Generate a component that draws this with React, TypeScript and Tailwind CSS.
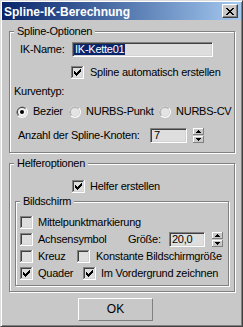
import type { ReactNode } from "react"

const X_ROWS = ["11000011", "01100110", "00111100", "00011000", "00111100", "01100110", "11000011"]

function CloseGlyph() {
  return (
    <svg width="8" height="7" viewBox="0 0 8 7" shapeRendering="crispEdges">
      {X_ROWS.flatMap((row, y) =>
        row.split("").map((c, x) => (c === "1" ? <rect key={`${x}-${y}`} x={x} y={y} width="1" height="1" fill="#000" /> : null)),
      )}
    </svg>
  )
}

function Check({ checked }: { checked?: boolean }) {
  return (
    <svg width="13" height="13" viewBox="0 0 13 13" shapeRendering="crispEdges" className="shrink-0">
      <rect width="13" height="13" fill="#fff" />
      <rect width="12" height="1" fill="#808080" />
      <rect width="1" height="12" fill="#808080" />
      <rect x="1" y="1" width="10" height="1" fill="#404040" />
      <rect x="1" y="1" width="1" height="10" fill="#404040" />
      <rect x="1" y="11" width="11" height="1" fill="#d4d4d4" />
      <rect x="11" y="1" width="1" height="11" fill="#d4d4d4" />
      <rect x="2" y="2" width="9" height="9" fill="#dedede" />
      {checked &&
        [5, 6, 7, 6, 5, 4, 3].map((top, i) => <rect key={i} x={3 + i} y={top} width="1" height="3" fill="#000" />)}
    </svg>
  )
}

function Radio({ checked }: { checked?: boolean }) {
  return (
    <svg width="12" height="12" viewBox="0 0 12 12" className="shrink-0">
      <circle cx="6" cy="6" r="6" fill="#fff" />
      <path d="M1.76 10.24A6 6 0 0 1 10.24 1.76L6 6Z" fill={checked ? "#808080" : "#a8a8a8"} />
      <circle cx="6" cy="6" r="5" fill="#d4d4d4" />
      <path d="M2.46 9.54A5 5 0 0 1 9.54 2.46L6 6Z" fill={checked ? "#404040" : "#b4b4b4"} />
      <circle cx="6" cy="6" r="4" fill={checked ? "#f4f4f4" : "#e4e4e4"} />
      {checked && <circle cx="6" cy="6" r="2" fill="#000" />}
    </svg>
  )
}

function Spin({ className = "" }: { className?: string }) {
  return (
    <svg width="11" height="15" viewBox="0 0 11 15" shapeRendering="crispEdges" className={`shrink-0 ${className}`}>
      <rect width="11" height="15" fill="#c8c8c8" />
      {/* upper half */}
      <rect width="11" height="1" fill="#fff" />
      <rect width="1" height="7" fill="#fff" />
      <rect y="6" width="11" height="1" fill="#808080" />
      <rect x="10" width="1" height="7" fill="#808080" />
      {/* lower half */}
      <rect y="8" width="11" height="1" fill="#fff" />
      <rect y="8" width="1" height="7" fill="#fff" />
      <rect y="14" width="11" height="1" fill="#808080" />
      <rect x="10" y="8" width="1" height="7" fill="#808080" />
      {/* arrows */}
      <rect x="5" y="2" width="1" height="1" fill="#000" />
      <rect x="4" y="3" width="3" height="1" fill="#000" />
      <rect x="3" y="4" width="5" height="1" fill="#000" />
      <rect x="3" y="10" width="5" height="1" fill="#000" />
      <rect x="4" y="11" width="3" height="1" fill="#000" />
      <rect x="5" y="12" width="1" height="1" fill="#000" />
    </svg>
  )
}

function Field({ className = "", children }: { className?: string; children: ReactNode }) {
  return (
    <div
      className={`flex h-[15px] shrink-0 items-center border border-t-[#808080] border-l-[#808080] border-r-white border-b-white bg-[#dedede] p-px shadow-[inset_1px_1px_0_#404040,inset_-1px_-1px_0_#d4d4d4] ${className}`}
    >
      {children}
    </div>
  )
}

function GroupBox({ label, className = "", children }: { label: string; className?: string; children: ReactNode }) {
  return (
    <div
      className={`relative shrink-0 border border-[#808080] shadow-[inset_1px_1px_0_#fff,1px_1px_0_#fff] ${className}`}
    >
      <span className="absolute -top-[7px] left-[4px] bg-[#c8c8c8] px-[3px] leading-[13px]">{label}</span>
      {children}
    </div>
  )
}

export default function App() {
  return (
    <div className="flex h-[327px] w-[243px] flex-col border border-t-[#dcdcdc] border-l-[#dcdcdc] border-r-[#404040] border-b-[#404040] bg-[#c8c8c8] p-px font-['Liberation_Sans',Arial,sans-serif] text-[11px] leading-[13px] tracking-[-0.25px] text-black shadow-[inset_1px_1px_0_#fff,inset_-1px_-1px_0_#808080]">
      {/* Title bar */}
      <div className="flex h-[18px] shrink-0 items-center justify-between bg-linear-to-r from-[#0a246a] to-[#a6caf0] pl-[2px] pr-[3px]">
        <span className="pt-px text-[12px] font-bold leading-[14px] tracking-normal text-white">Spline-IK-Berechnung</span>
        <div className="flex h-[14px] w-[16px] items-center justify-center border border-t-white border-l-white border-r-[#404040] border-b-[#404040] bg-[#c8c8c8] shadow-[inset_-1px_-1px_0_#808080]">
          <CloseGlyph />
        </div>
      </div>

      <GroupBox label="Spline-Optionen" className="ml-[7px] mt-[11px] h-[122px] w-[226px]">
        <div className="mt-[10px] flex h-[15px] items-center">
          <span className="ml-[10px] w-[52px]">IK-Name:</span>
          <Field className="w-[141px]">
            <span className="h-[11px] bg-[#0a246a] px-px leading-[11px] text-white">IK-Kette01</span>
          </Field>
        </div>
        <div className="ml-[61px] mt-[9px] flex h-[13px] items-center">
          <Check checked />
          <span className="ml-[6px]">Spline automatisch erstellen</span>
        </div>
        <div className="ml-[4px] mt-[6px]">Kurventyp:</div>
        <div className="ml-[6px] mt-[7px] flex h-[13px] items-center">
          <div className="flex w-[53px] items-center">
            <Radio checked />
            <span className="ml-[5px]">Bezier</span>
          </div>
          <div className="flex w-[90px] items-center">
            <Radio />
            <span className="ml-[5px]">NURBS-Punkt</span>
          </div>
          <div className="flex items-center">
            <Radio />
            <span className="ml-[5px]">NURBS-CV</span>
          </div>
        </div>
        <div className="ml-[8px] mt-[10px] flex h-[15px] items-center">
          <span className="w-[132px]">Anzahl der Spline-Knoten:</span>
          <Field className="w-[37px]">
            <span className="pl-[2px] leading-[11px]">7</span>
          </Field>
          <Spin className="ml-[6px]" />
        </div>
      </GroupBox>

      <GroupBox label="Helferoptionen" className="ml-[7px] mt-[10px] h-[129px] w-[226px]">
        <div className="ml-[62px] mt-[16px] flex h-[13px] items-center">
          <Check checked />
          <span className="ml-[5px]">Helfer erstellen</span>
        </div>
        <GroupBox label="Bildschirm" className="ml-[5px] mt-[8px] h-[85px] w-[214px]">
          <div className="ml-[4px] mt-[14px] flex h-[13px] items-center">
            <Check />
            <span className="ml-[5px]">Mittelpunktmarkierung</span>
          </div>
          <div className="ml-[4px] mt-[3px] flex h-[15px] items-center">
            <div className="flex w-[108px] items-center">
              <Check />
              <span className="ml-[5px]">Achsensymbol</span>
            </div>
            <span className="w-[41px]">Größe:</span>
            <Field className="w-[36px]">
              <span className="pl-px leading-[11px]">20,0</span>
            </Field>
            <Spin className="ml-[7px]" />
          </div>
          <div className="ml-[4px] mt-[3px] flex h-[13px] items-center">
            <div className="flex w-[57px] items-center">
              <Check />
              <span className="ml-[5px]">Kreuz</span>
            </div>
            <Check />
            <span className="ml-[6px]">Konstante Bildschirmgröße</span>
          </div>
          <div className="ml-[4px] mt-[4px] flex h-[13px] items-center">
            <div className="flex w-[63px] items-center">
              <Check checked />
              <span className="ml-[5px]">Quader</span>
            </div>
            <Check checked />
            <span className="ml-[5px]">Im Vordergrund zeichnen</span>
          </div>
        </GroupBox>
      </GroupBox>

      <div className="ml-[76px] mt-[6px] flex h-[23px] w-[75px] shrink-0 items-center justify-center border border-t-white border-l-white border-r-[#808080] border-b-[#808080] text-[12px] tracking-normal">
        OK
      </div>
    </div>
  )
}
